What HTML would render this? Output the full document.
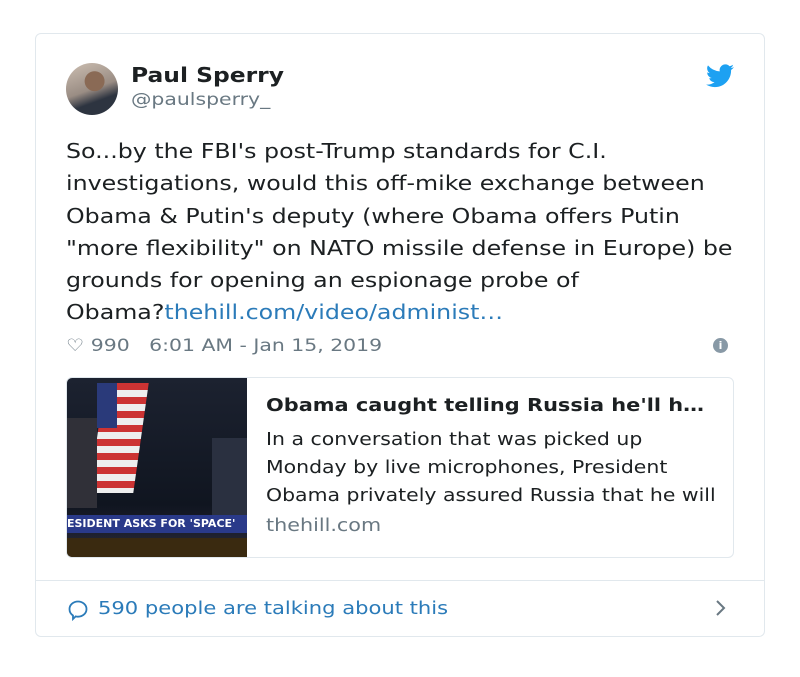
<!DOCTYPE html>
<html><head><meta charset="utf-8"><style>
*{margin:0;padding:0;box-sizing:border-box}
body{width:800px;height:677px;background:#fff;font-family:"DejaVu Sans","Liberation Sans",sans-serif;color:#1c2022;position:relative;overflow:hidden}
.s{transform-origin:0 0;white-space:nowrap}
.card{position:absolute;left:35px;top:33px;width:730px;height:604px;border:1px solid #e1e8ed;border-radius:6px}
.av{position:absolute;left:66px;top:63px;width:52px;height:52px;border-radius:50%;background:radial-gradient(circle at 55% 35%,#8a6a55 0 22%,transparent 23%),linear-gradient(160deg,#cdbfb2,#9a8d84 50%,#2d3440 70%)}
.name{position:absolute;left:131px;top:63px;font-weight:bold;font-size:20px;transform:scaleX(1.17)}
.handle{position:absolute;left:131px;top:90px;font-size:17px;color:#697882;transform:scaleX(1.2)}
.bird{position:absolute;left:706px;top:64px}
.text{position:absolute;left:66px;top:135px;font-size:20px;line-height:32.3px;transform:scaleX(1.185)}
a{color:#2b7bb9;text-decoration:none}
.meta{position:absolute;left:66px;top:336px;font-size:17px;color:#697882;transform:scaleX(1.2)}
.info{position:absolute;left:713px;top:338px;width:15px;height:15px;border-radius:50%;background:#8899a6;color:#fff;font-size:11px;font-weight:bold;text-align:center;line-height:15px}
.lc{position:absolute;left:66px;top:377px;width:668px;height:181px;border:1px solid #e1e8ed;border-radius:6px;overflow:hidden}
.img{position:absolute;left:0;top:0;width:180px;height:181px;background:linear-gradient(#1c2230,#101520 70%,#2a2a3a)}
.lt{position:absolute;left:199px;top:17px;font-weight:bold;font-size:18px;transform:scaleX(1.16)}
.ld{position:absolute;left:199px;top:48px;font-size:18px;line-height:28px;transform:scaleX(1.135)}
.dom{position:absolute;left:199px;top:137px;font-size:18px;color:#697882;transform:scaleX(1.15)}
.div{position:absolute;left:36px;top:580px;width:728px;border-top:1px solid #e1e8ed}
.foot{position:absolute;left:98px;top:598px;font-size:18px;color:#2b7bb9;transform:scaleX(1.17)}
.bub{position:absolute;left:67px;top:599px}
.chev{position:absolute;left:714px;top:598px}
</style></head><body>
<div class="card"></div>
<div class="av"></div>
<div class="name s">Paul Sperry</div>
<div class="handle s">@paulsperry_</div>
<svg class="bird" width="28" height="24" viewBox="0 0 24 20"><path fill="#1da1f2" d="M24 2.4a10 10 0 0 1-2.8.8A5 5 0 0 0 23.3.4a10 10 0 0 1-3.1 1.2A4.9 4.9 0 0 0 11.8 6 14 14 0 0 1 1.7.9a4.9 4.9 0 0 0 1.5 6.6A4.9 4.9 0 0 1 1 6.9a4.9 4.9 0 0 0 3.9 4.8 5 5 0 0 1-2.2.1 4.9 4.9 0 0 0 4.6 3.4A9.9 9.9 0 0 1 0 17.300 14 14 0 0 0 7.5 19.5c9.1 0 14-7.5 14-14v-.6A10 10 0 0 0 24 2.4z"/></svg>
<div class="text s">So...by the FBI's post-Trump standards for C.I.<br>investigations, would this off-mike exchange between<br>Obama &amp; Putin's deputy (where Obama offers Putin<br>"more flexibility" on NATO missile defense in Europe) be<br>grounds for opening an espionage probe of<br>Obama?<a>thehill.com/video/administ…</a></div>
<div class="meta s">♡ 990&nbsp;&nbsp; 6:01 AM - Jan 15, 2019</div>
<div class="info">i</div>
<div class="lc">
<div class="img">
<div style="position:absolute;left:30px;top:5px;width:44px;height:110px;background:repeating-linear-gradient(#c33 0 7px,#eee 7px 14px);transform:skewX(-8deg)"></div>
<div style="position:absolute;left:30px;top:5px;width:20px;height:45px;background:#2a3a7a"></div>
<div style="position:absolute;left:0;top:40px;width:30px;height:90px;background:#303038"></div>
<div style="position:absolute;left:145px;top:60px;width:35px;height:80px;background:#2a3040"></div>
<div style="position:absolute;left:0;top:137px;width:180px;height:18px;background:#2a3a8a;color:#fff;font-size:11px;font-weight:bold;white-space:nowrap;line-height:18px">ESIDENT ASKS FOR 'SPACE'</div>
<div style="position:absolute;left:0;top:160px;width:180px;height:21px;background:#3a2a10"></div>
</div>
<div class="lt s">Obama caught telling Russia he'll h…</div>
<div class="ld s">In a conversation that was picked up<br>Monday by live microphones, President<br>Obama privately assured Russia that he will</div>
<div class="dom s">thehill.com</div>
</div>
<div class="div"></div>
<svg class="bub" width="22" height="22" viewBox="0 0 22 22"><path d="M11 2.5c4.7 0 8.5 3.4 8.5 7.6s-3.8 7.6-8.5 7.6c-.8 0-1.6-.1-2.3-.3L6 20v-3.5C3.900 15.1 2.5 12.8 2.5 10.1 2.5 5.9 6.3 2.5 11 2.5z" fill="none" stroke="#2b7bb9" stroke-width="1.8"/></svg>
<div class="foot s">590 people are talking about this</div>
<svg class="chev" width="14" height="20" viewBox="0 0 14 20"><path d="M3 3l7 7-7 7" fill="none" stroke="#697882" stroke-width="2"/></svg>
</body></html>
